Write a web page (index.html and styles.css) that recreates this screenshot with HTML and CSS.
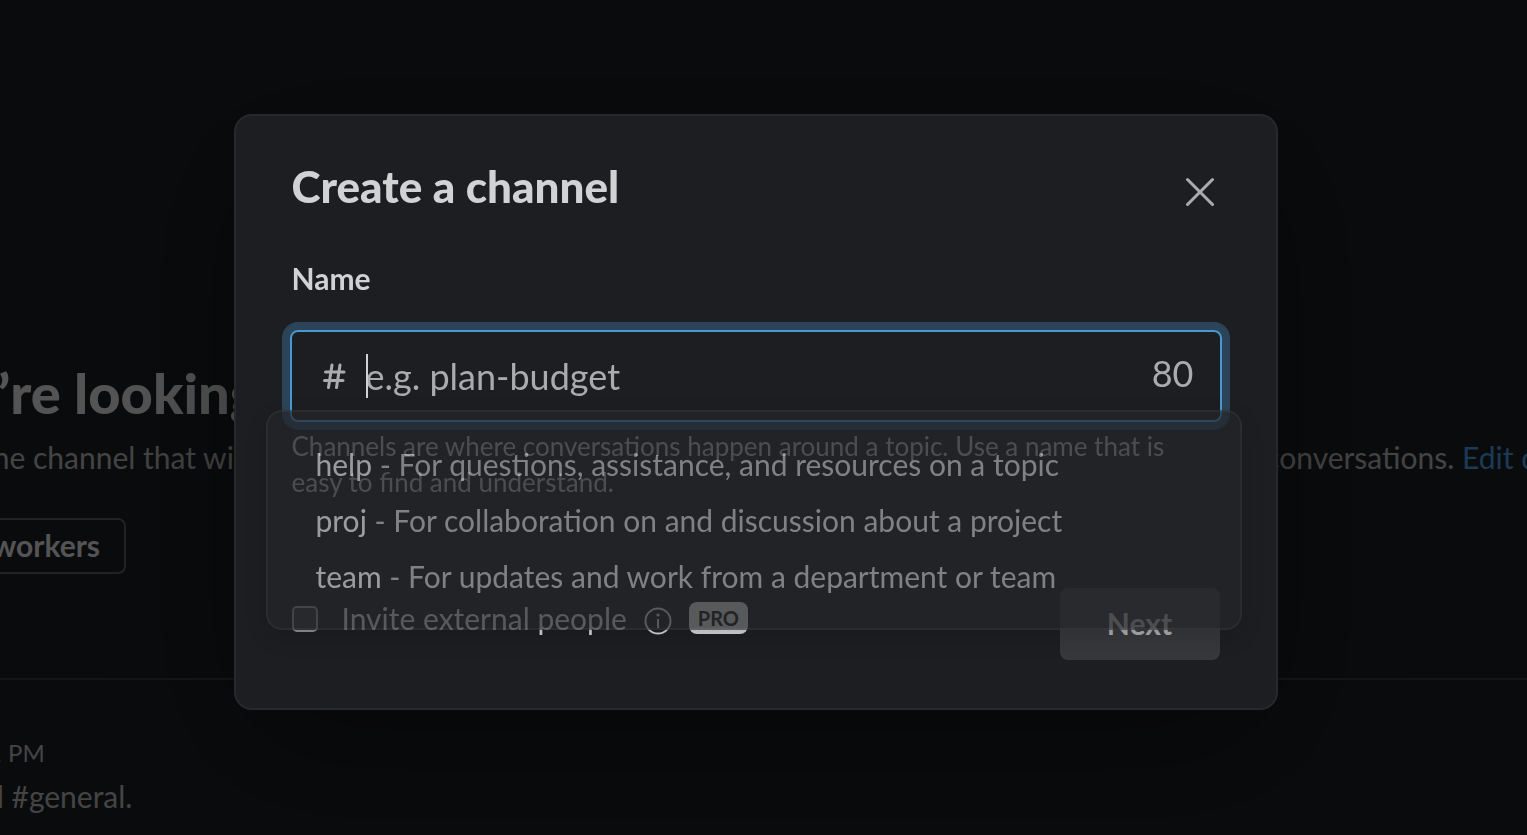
FILE: index.html
```html
<!DOCTYPE html>
<html lang="en">
<head>
    <meta charset="UTF-8">
    <meta name="viewport" content="width=device-width, initial-scale=1.0">
    <title>Create a channel</title>
    <link rel="stylesheet" href="styles.css">
</head>
<body>

    <main class="channel">
        <section class="intro">
            <h2 class="intro-title">u’re looking</h2>
            <div class="intro-text">
                <p class="intro-start">the channel that wi</p>
                <p class="intro-end">conversations. <a href="#">Edit d</a></p>
            </div>
            <button class="add-button" type="button">coworkers</button>
        </section>
        <section class="message">
            <span class="message-time">1 PM</span>
            <p class="message-text">d #general.</p>
        </section>
    </main>

    <div class="overlay">
        <form class="modal" role="dialog" aria-labelledby="modalTitle">
            <div class="modal-header">
                <h1 id="modalTitle">Create a channel</h1>
                <button class="close-button" type="button" aria-label="Close">
                    <svg width="30" height="30" viewBox="0 0 30 30">
                        <path d="M2.500 2.500 27.500 27.500M27.500 2.500 2.500 27.500"/>
                    </svg>
                </button>
            </div>

            <label class="field-label" for="channelName">Name</label>
            <div class="field">
                <div class="input-box">
                    <svg class="hash" width="24" height="26" viewBox="0 0 24 26">
                        <path d="M10 2 6.500 24.500M18 2 14.500 24.500M3.500 9h18.500M2.500 17.500h18.500"/>
                    </svg>
                    <div class="input-area">
                        <span class="caret"></span>
                        <input id="channelName" type="text" maxlength="80" placeholder="e.g. plan-budget" autocomplete="off">
                    </div>
                    <span class="counter">80</span>
                </div>
                <ul class="suggestions">
                    <li><b>help</b> - For questions, assistance, and resources on a topic</li>
                    <li><b>proj</b> - For collaboration on and discussion about a project</li>
                    <li><b>team</b> - For updates and work from a department or team</li>
                </ul>
            </div>
            <p class="hint">Channels are where conversations happen around a topic. Use a name that is easy to find and understand.</p>

            <div class="modal-footer">
                <div class="invite">
                    <input id="invite" type="checkbox">
                    <label for="invite">Invite external people</label>
                    <svg class="info" width="28" height="28" viewBox="0 0 28 28">
                        <circle cx="14" cy="14" r="12.500"/>
                        <path d="M14 12v9"/>
                        <circle class="dot" cx="14" cy="8" r="1.600"/>
                    </svg>
                    <span class="badge">PRO</span>
                </div>
                <button class="next-button" type="submit">Next</button>
            </div>
        </form>
    </div>

</body>
</html>
```

FILE: styles.css
```css
* {
    box-sizing: border-box;
}

body {
    margin: 0;
    min-height: 100vh;
    overflow: hidden;
    font-family: Lato, sans-serif;
    font-size: 30px;
    line-height: 44px;
    color: #d1d2d3;
    background-color: #1a1d21;
}

h1, h2, p, ul {
    margin: 0;
    padding: 0;
}

button, input {
    font-family: inherit;
    color: inherit;
}

/* Channel behind the dialog */
.channel {
    height: 100vh;
    overflow: hidden;
    white-space: nowrap;
}

.intro {
    padding-top: 361px;
    padding-bottom: 104px;
    border-bottom: 2px solid #35373b;
}

.intro-title {
    margin-left: -34px;
    font-size: 56px;
    line-height: 64px;
    font-weight: 900;
}

.intro-text {
    display: flex;
    justify-content: space-between;
    margin-top: 10px;
    color: #ababad;
}

.intro-start {
    margin-left: -18px;
}

.intro-end {
    margin-right: -11px;
}

.intro-end a {
    color: #4592d2;
    text-decoration: none;
}

.add-button {
    display: block;
    height: 56px;
    margin-top: 39px;
    margin-left: -65px;
    padding: 0 24px 2px;
    font-size: 30px;
    font-weight: 700;
    background-color: transparent;
    border: 2px solid #565856;
    border-radius: 8px;
}

.message {
    padding-top: 52px;
    color: #ababad;
}

.message-time {
    display: block;
    margin-left: -12px;
    font-size: 24px;
    line-height: 42px;
}

.message-text {
    margin-left: -13px;
}

/* Dialog */
.overlay {
    position: fixed;
    inset: 0;
    display: flex;
    justify-content: center;
    align-items: center;
    padding: 0 16px 12px 0;
    background-color: rgba(0, 0, 0, 0.6);
}

.modal {
    width: 100%;
    max-width: 1044px;
    padding: 42px 56px 48px;
    background-color: #1d1e22;
    border: 2px solid #27282a;
    border-radius: 18px;
    box-shadow: 0 36px 144px rgba(0, 0, 0, 0.4);
}

.modal-header {
    display: flex;
    justify-content: space-between;
    align-items: flex-end;
}

.modal-header h1 {
    font-size: 44px;
    line-height: 56px;
    font-weight: 900;
}

.close-button {
    display: flex;
    justify-content: center;
    align-items: center;
    width: 40px;
    height: 44px;
    padding: 0;
    background-color: transparent;
    border: none;
    cursor: pointer;
}

.close-button svg {
    fill: none;
    stroke: #ababad;
    stroke-width: 3;
    stroke-linecap: round;
}

.field-label {
    display: block;
    margin-top: 42px;
    font-weight: 700;
}

.field {
    position: relative;
    margin: 30px -2px 0;
}

.input-box {
    display: flex;
    align-items: center;
    height: 92px;
    padding: 0 26px 0 30px;
    border: 2px solid #4799d0;
    border-radius: 8px;
    box-shadow: 0 0 0 8px #2b4457;
    color: #ababad;
}

.hash {
    fill: none;
    stroke: #ababad;
    stroke-width: 3;
    stroke-linecap: round;
}

.input-area {
    position: relative;
    flex: 1;
    margin-left: 20px;
}

.input-area input {
    display: block;
    width: 100%;
    height: 44px;
    padding: 0;
    font-size: 36px;
    background-color: transparent;
    border: none;
    outline: none;
}

.input-area input::placeholder {
    color: #ababad;
}

.caret {
    position: absolute;
    top: 0;
    left: 0;
    width: 2px;
    height: 44px;
    background-color: #d1d2d3;
}

.counter {
    padding-bottom: 6px;
    font-size: 36px;
}

.suggestions {
    position: absolute;
    top: 80px;
    left: -24px;
    right: -20px;
    padding: 24px 48px;
    list-style: none;
    line-height: 56px;
    color: #ababad;
    background-color: #242529;
    border: 2px solid #323337;
    border-radius: 16px;
    box-shadow: 0 8px 24px rgba(0, 0, 0, 0.2);
    opacity: 0.7;
}

.suggestions b {
    font-weight: 400;
    color: #d1d2d3;
}

.hint {
    margin-top: 6px;
    font-size: 26px;
    line-height: 36px;
    color: #ababad;
}

.modal-footer {
    display: flex;
    justify-content: space-between;
    align-items: flex-start;
    margin-top: 88px;
}

.invite {
    display: flex;
    align-items: center;
    padding-top: 8px;
}

.invite input {
    appearance: none;
    width: 26px;
    height: 26px;
    margin: 2px 24px 0 0;
    background-color: #323337;
    border: 2px solid #8d8e90;
    border-radius: 5px;
}

.info {
    margin: 6px 17px 0;
    fill: none;
    stroke: #d1d2d3;
    stroke-width: 2;
}

.info .dot {
    fill: #d1d2d3;
    stroke: none;
}

.badge {
    padding: 0 9px;
    font-size: 20px;
    line-height: 32px;
    font-weight: 700;
    color: #1d1e22;
    background-color: #d1d2d3;
    border-radius: 8px;
}

.next-button {
    width: 160px;
    height: 72px;
    padding-bottom: 2px;
    font-size: 30px;
    font-weight: 700;
    color: #ababad;
    background-color: #37383c;
    border: none;
    border-radius: 8px;
}
```
